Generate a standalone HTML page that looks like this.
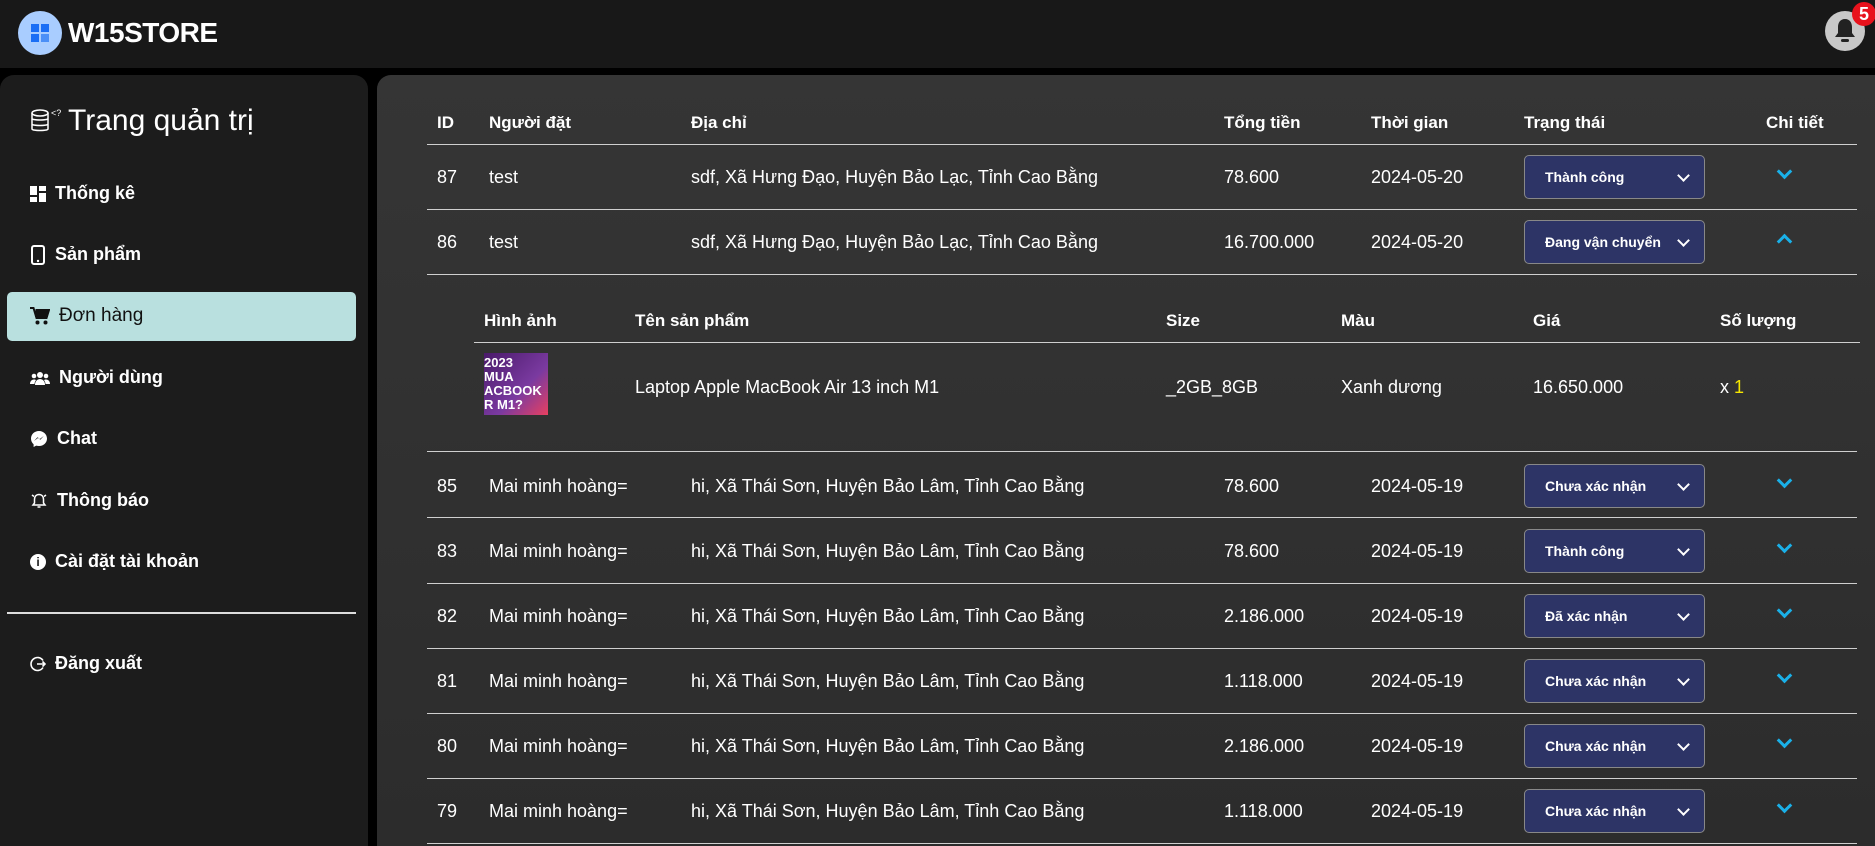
<!DOCTYPE html>
<html><head><meta charset="utf-8"><style>
*{box-sizing:border-box;margin:0;padding:0}
html,body{width:1875px;height:846px;overflow:hidden}
body{background:#000;font-family:"Liberation Sans",sans-serif;color:#fff;position:relative}
.hdr{position:absolute;left:0;top:0;width:1875px;height:68px;background:#181818}
.side{position:absolute;left:0;top:75px;width:368px;height:771px;background:#1c1c1c;border-radius:14px 14px 0 0}
.main{position:absolute;left:377px;top:75px;width:1498px;height:771px;background:linear-gradient(#353535,#2c2c2c);border-radius:14px 0 0 0}
.a{position:absolute;white-space:nowrap}
.mi{position:absolute;left:30px;font-size:18px;font-weight:bold;display:flex;align-items:center;gap:9px}
.mi svg{flex:none}
.th{font-size:17px;font-weight:bold;position:absolute;white-space:nowrap}
.td{font-size:18px;position:absolute;white-space:nowrap}
.ln{position:absolute;height:1px;background:#cfcfcf}
.sel{position:absolute;left:1524px;width:181px;height:44px;background:#2d3466;border:1px solid #888;border-radius:5px;font-size:14px;font-weight:bold;padding-left:20px;line-height:42px}
.sel:after{content:"";position:absolute;right:16px;top:15px;width:7px;height:7px;border-right:2px solid #fff;border-bottom:2px solid #fff;transform:rotate(45deg)}
.chev{position:absolute;left:1779px;width:11px;height:11px;border-right:3px solid #1ab0e8;border-bottom:3px solid #1ab0e8;transform:rotate(45deg)}
.up{transform:rotate(-135deg)}
</style></head><body>
<div class="hdr"></div>
<div class="a" style="left:18px;top:11px;width:44px;height:44px;border-radius:50%;background:#a9cdff"></div>
<div class="a" style="left:31px;top:24px;width:8px;height:8px;background:#1a6ef5"></div>
<div class="a" style="left:41px;top:24px;width:8px;height:8px;background:#1a6ef5"></div>
<div class="a" style="left:31px;top:34px;width:8px;height:8px;background:#1a6ef5"></div>
<div class="a" style="left:41px;top:34px;width:8px;height:8px;background:#4a8ff7"></div>
<div class="a" style="left:68px;top:17px;font-size:28px;font-weight:bold;letter-spacing:-0.5px">W15STORE</div>
<div class="a" style="left:1825px;top:11px;width:40px;height:40px;border-radius:50%;background:#c8c8c8"></div>
<svg class="a" style="left:1833px;top:17px" width="24" height="28" viewBox="0 0 24 28"><path d="M12 2c-5 0-7 4-7 8v6l-3 4h20l-3-4v-6c0-4-2-8-7-8z" fill="#222"/><rect x="8" y="22" width="8" height="3" rx="1.5" fill="#222"/></svg>
<div class="a" style="left:1852px;top:2px;width:24px;height:24px;border-radius:50%;background:#e8121c;font-size:18px;font-weight:bold;text-align:center;line-height:24px">5</div>

<div class="side"></div>
<svg class="a" style="left:30px;top:108px" width="34" height="26" viewBox="0 0 34 26"><g fill="none" stroke="#fff" stroke-width="1.5"><ellipse cx="10" cy="5" rx="8" ry="3"/><path d="M2 5v16c0 2 16 2 16 0V5M2 10.5c0 2 16 2 16 0M2 16c0 2 16 2 16 0"/></g><text x="21" y="8" fill="#fff" font-size="9" font-family="Liberation Sans">&lt;?</text></svg>
<div class="a" style="left:68px;top:104px;font-size:30px">Trang quản trị</div>
<div class="mi" style="top:183px"><svg width="16" height="16" viewBox="0 0 16 16" fill="#fff"><rect x="0" y="0" width="7" height="9"/><rect x="9" y="0" width="7" height="5"/><rect x="0" y="11" width="7" height="5"/><rect x="9" y="7" width="7" height="9"/></svg>Thống kê</div>
<div class="mi" style="top:244px"><svg width="16" height="20" viewBox="0 0 16 20"><rect x="2" y="1" width="12" height="18" rx="2" fill="none" stroke="#fff" stroke-width="2"/><circle cx="8" cy="16" r="1.2" fill="#fff"/></svg>Sản phẩm</div>
<div class="a" style="left:7px;top:292px;width:349px;height:49px;background:#b9e0df;border-radius:5px"></div>
<div class="mi" style="top:305px;color:#111;font-weight:normal;font-size:19px"><svg width="20" height="18" viewBox="0 0 20 18" fill="#111"><path d="M0 1h3.5l3 10h10l2.5-8H5.5" stroke="#111" stroke-width="2" fill="none"/><rect x="5" y="4" width="13" height="6"/><circle cx="7.5" cy="15.5" r="2"/><circle cx="15.5" cy="15.5" r="2"/></svg>Đơn hàng</div>
<div class="mi" style="top:367px"><svg width="20" height="16" viewBox="0 0 20 16" fill="#fff"><circle cx="10" cy="5" r="3"/><circle cx="4" cy="6" r="2.3"/><circle cx="16" cy="6" r="2.3"/><path d="M5 15c0-4 2.5-6 5-6s5 2 5 6z"/><path d="M0 14c0-3 2-4.5 4-4.5 1 0 1.5.3 2 .6-1 1.2-1.4 2.5-1.5 3.9z"/><path d="M20 14c0-3-2-4.5-4-4.5-1 0-1.5.3-2 .6 1 1.2 1.4 2.5 1.5 3.9z"/></svg>Người dùng</div>
<div class="mi" style="top:428px"><svg width="18" height="18" viewBox="0 0 18 18"><path d="M9 1C4.5 1 1 4.3 1 8.6c0 2.3 1 4.2 2.6 5.6V17l2.6-1.4c.9.2 1.8.4 2.8.4 4.5 0 8-3.3 8-7.4S13.5 1 9 1z" fill="#fff"/><path d="M4 11l3.5-3.7 2 2L13.8 6l-3.5 3.8-2-2z" fill="#1c1c1c"/></svg>Chat</div>
<div class="mi" style="top:490px"><svg width="18" height="18" viewBox="0 0 18 18" fill="none" stroke="#fff" stroke-width="1.5"><path d="M9 2.5c-3 0-4.5 2.3-4.5 5v3.5L3 13h12l-1.5-2V7.5c0-2.7-1.5-5-4.5-5z"/><path d="M7.5 15h3M2 3l2 1.5M16 3l-2 1.5"/></svg>Thông báo</div>
<div class="mi" style="top:551px"><span style="display:inline-block;width:16px;height:16px;border-radius:50%;background:#fff;color:#1c1c1c;font-size:12px;text-align:center;line-height:16px">i</span>Cài đặt tài khoản</div>
<div class="ln" style="left:7px;top:612px;width:349px;background:#ddd;height:2px"></div>
<div class="mi" style="top:653px"><svg width="16" height="16" viewBox="0 0 16 16" fill="none" stroke="#fff" stroke-width="1.6"><path d="M13 4.5A6.5 6.5 0 1 0 13 11.5"/><path d="M7 8h8M12.5 5.5L15 8l-2.5 2.5"/></svg>Đăng xuất</div>

<div class="main"></div>
<div class="th" style="left:437px;top:113px">ID</div>
<div class="th" style="left:489px;top:113px">Người đặt</div>
<div class="th" style="left:691px;top:113px">Địa chỉ</div>
<div class="th" style="left:1224px;top:113px">Tổng tiền</div>
<div class="th" style="left:1371px;top:113px">Thời gian</div>
<div class="th" style="left:1524px;top:113px">Trạng thái</div>
<div class="th" style="left:1766px;top:113px">Chi tiết</div>
<div class="ln" style="left:427px;top:144px;width:1430px"></div>

<div class="td" style="left:437px;top:167px">87</div><div class="td" style="left:489px;top:167px">test</div><div class="td" style="left:691px;top:167px">sdf, Xã Hưng Đạo, Huyện Bảo Lạc, Tỉnh Cao Bằng</div><div class="td" style="left:1224px;top:167px">78.600</div><div class="td" style="left:1371px;top:167px">2024-05-20</div>
<div class="sel" style="top:155px">Thành công</div><div class="chev" style="top:166px"></div>
<div class="ln" style="left:427px;top:209px;width:1430px"></div>
<div class="td" style="left:437px;top:232px">86</div><div class="td" style="left:489px;top:232px">test</div><div class="td" style="left:691px;top:232px">sdf, Xã Hưng Đạo, Huyện Bảo Lạc, Tỉnh Cao Bằng</div><div class="td" style="left:1224px;top:232px">16.700.000</div><div class="td" style="left:1371px;top:232px">2024-05-20</div>
<div class="sel" style="top:220px">Đang vận chuyển</div><div class="chev up" style="top:236px"></div>
<div class="ln" style="left:427px;top:274px;width:1430px"></div>

<div class="th" style="left:484px;top:311px">Hình ảnh</div><div class="th" style="left:635px;top:311px">Tên sản phẩm</div><div class="th" style="left:1166px;top:311px">Size</div><div class="th" style="left:1341px;top:311px">Màu</div><div class="th" style="left:1533px;top:311px">Giá</div><div class="th" style="left:1720px;top:311px">Số lượng</div>
<div class="ln" style="left:474px;top:342px;width:1386px"></div>
<div class="a" style="left:484px;top:353px;width:64px;height:62px;background:linear-gradient(135deg,#4a1a6a,#7a3aa0 60%,#e84060);font-size:13px;font-weight:bold;line-height:14px;padding-top:3px;overflow:hidden">2023<br>MUA<br>ACBOOK<br>R M1?</div>
<div class="td" style="left:635px;top:377px">Laptop Apple MacBook Air 13 inch M1</div><div class="td" style="left:1166px;top:377px">_2GB_8GB</div><div class="td" style="left:1341px;top:377px">Xanh dương</div><div class="td" style="left:1533px;top:377px">16.650.000</div><div class="td" style="left:1720px;top:377px">x <span style="color:#f5e600">1</span></div>
<div class="ln" style="left:427px;top:451px;width:1430px"></div>

<div class="td" style="left:437px;top:476px">85</div><div class="td" style="left:489px;top:476px">Mai minh hoàng=</div><div class="td" style="left:691px;top:476px">hi, Xã Thái Sơn, Huyện Bảo Lâm, Tỉnh Cao Bằng</div><div class="td" style="left:1224px;top:476px">78.600</div><div class="td" style="left:1371px;top:476px">2024-05-19</div>
<div class="sel" style="top:464px">Chưa xác nhận</div><div class="chev" style="top:475px"></div>
<div class="ln" style="left:427px;top:517px;width:1430px"></div>
<div class="td" style="left:437px;top:541px">83</div><div class="td" style="left:489px;top:541px">Mai minh hoàng=</div><div class="td" style="left:691px;top:541px">hi, Xã Thái Sơn, Huyện Bảo Lâm, Tỉnh Cao Bằng</div><div class="td" style="left:1224px;top:541px">78.600</div><div class="td" style="left:1371px;top:541px">2024-05-19</div>
<div class="sel" style="top:529px">Thành công</div><div class="chev" style="top:540px"></div>
<div class="ln" style="left:427px;top:583px;width:1430px"></div>
<div class="td" style="left:437px;top:606px">82</div><div class="td" style="left:489px;top:606px">Mai minh hoàng=</div><div class="td" style="left:691px;top:606px">hi, Xã Thái Sơn, Huyện Bảo Lâm, Tỉnh Cao Bằng</div><div class="td" style="left:1224px;top:606px">2.186.000</div><div class="td" style="left:1371px;top:606px">2024-05-19</div>
<div class="sel" style="top:594px">Đã xác nhận</div><div class="chev" style="top:605px"></div>
<div class="ln" style="left:427px;top:648px;width:1430px"></div>
<div class="td" style="left:437px;top:671px">81</div><div class="td" style="left:489px;top:671px">Mai minh hoàng=</div><div class="td" style="left:691px;top:671px">hi, Xã Thái Sơn, Huyện Bảo Lâm, Tỉnh Cao Bằng</div><div class="td" style="left:1224px;top:671px">1.118.000</div><div class="td" style="left:1371px;top:671px">2024-05-19</div>
<div class="sel" style="top:659px">Chưa xác nhận</div><div class="chev" style="top:670px"></div>
<div class="ln" style="left:427px;top:713px;width:1430px"></div>
<div class="td" style="left:437px;top:736px">80</div><div class="td" style="left:489px;top:736px">Mai minh hoàng=</div><div class="td" style="left:691px;top:736px">hi, Xã Thái Sơn, Huyện Bảo Lâm, Tỉnh Cao Bằng</div><div class="td" style="left:1224px;top:736px">2.186.000</div><div class="td" style="left:1371px;top:736px">2024-05-19</div>
<div class="sel" style="top:724px">Chưa xác nhận</div><div class="chev" style="top:735px"></div>
<div class="ln" style="left:427px;top:778px;width:1430px"></div>
<div class="td" style="left:437px;top:801px">79</div><div class="td" style="left:489px;top:801px">Mai minh hoàng=</div><div class="td" style="left:691px;top:801px">hi, Xã Thái Sơn, Huyện Bảo Lâm, Tỉnh Cao Bằng</div><div class="td" style="left:1224px;top:801px">1.118.000</div><div class="td" style="left:1371px;top:801px">2024-05-19</div>
<div class="sel" style="top:789px">Chưa xác nhận</div><div class="chev" style="top:800px"></div>
<div class="ln" style="left:427px;top:843px;width:1430px"></div>
</body></html>
